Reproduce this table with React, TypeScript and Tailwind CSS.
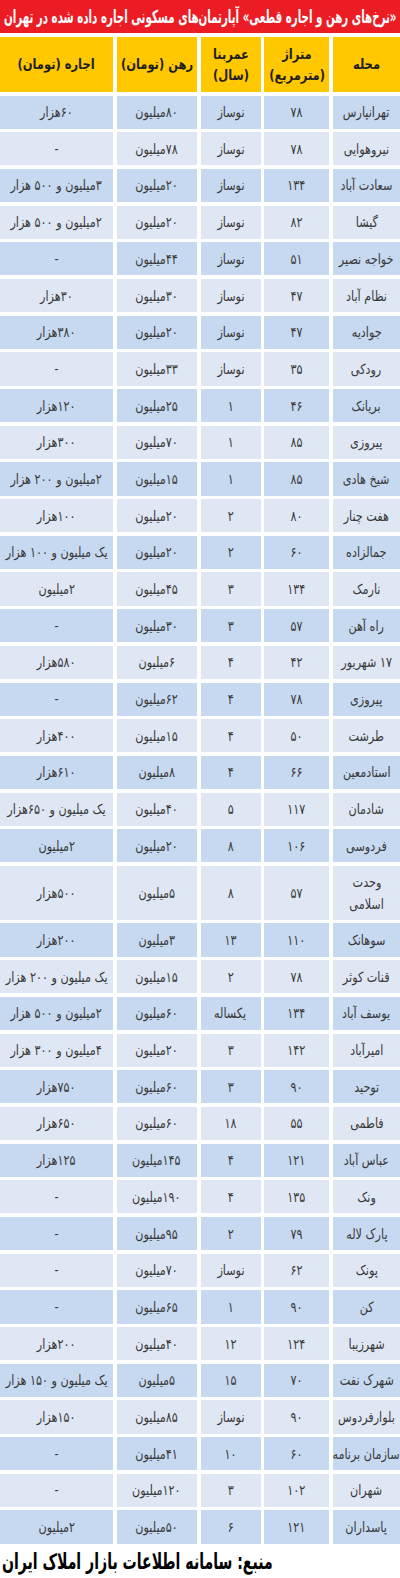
import React from "react"

const fa = (s: string) => s.replace(/[0-9]/g, (d) => "۰۱۲۳۴۵۶۷۸۹"[Number(d)])

// محله، متراژ، عمربنا، رهن، اجاره
const rows: string[][] = [
    ["تهرانپارس", "78", "نوساز", "80میلیون", "60هزار"],
    ["نیروهوایی", "78", "نوساز", "78میلیون", "-"],
    ["سعادت آباد", "134", "نوساز", "20میلیون", "3میلیون و 500 هزار"],
    ["گیشا", "82", "نوساز", "20میلیون", "2میلیون و 500 هزار"],
    ["خواجه نصیر", "51", "نوساز", "44میلیون", "-"],
    ["نظام آباد", "47", "نوساز", "30میلیون", "30هزار"],
    ["جوادیه", "47", "نوساز", "20میلیون", "380هزار"],
    ["رودکی", "35", "نوساز", "33میلیون", "-"],
    ["بریانک", "46", "1", "25میلیون", "120هزار"],
    ["پیروزی", "85", "1", "70میلیون", "300هزار"],
    ["شیخ هادی", "85", "1", "15میلیون", "2میلیون و 200 هزار"],
    ["هفت چنار", "80", "2", "20میلیون", "100هزار"],
    ["جمالزاده", "60", "2", "20میلیون", "یک میلیون و 100 هزار"],
    ["نارمک", "134", "3", "45میلیون", "2میلیون"],
    ["راه آهن", "57", "3", "30میلیون", "-"],
    ["17 شهریور", "42", "4", "6میلیون", "580هزار"],
    ["پیروزی", "78", "4", "62میلیون", "-"],
    ["طرشت", "50", "4", "15میلیون", "400هزار"],
    ["استادمعین", "66", "4", "8میلیون", "610هزار"],
    ["شادمان", "117", "5", "40میلیون", "یک میلیون و 650هزار"],
    ["فردوسی", "106", "8", "20میلیون", "2میلیون"],
    ["وحدت اسلامی", "57", "8", "5میلیون", "500هزار"],
    ["سوهانک", "110", "13", "3میلیون", "200هزار"],
    ["قنات کوثر", "78", "2", "15میلیون", "یک میلیون و 200 هزار"],
    ["یوسف آباد", "134", "یکساله", "60میلیون", "2میلیون و 500 هزار"],
    ["امیرآباد", "142", "3", "20میلیون", "4میلیون و 300 هزار"],
    ["توحید", "90", "3", "60میلیون", "750هزار"],
    ["فاطمی", "55", "18", "60میلیون", "650هزار"],
    ["عباس آباد", "121", "4", "145میلیون", "125هزار"],
    ["ونک", "135", "4", "190میلیون", "-"],
    ["پارک لاله", "79", "2", "95میلیون", "-"],
    ["پونک", "62", "نوساز", "70میلیون", "-"],
    ["کن", "90", "1", "65میلیون", "-"],
    ["شهرزیبا", "124", "12", "40میلیون", "200هزار"],
    ["شهرک نفت", "70", "15", "5میلیون", "یک میلیون و 150 هزار"],
    ["بلوارفردوس", "90", "نوساز", "85میلیون", "150هزار"],
    ["سازمان برنامه", "60", "10", "41میلیون", "-"],
    ["شهران", "102", "3", "120میلیون", "-"],
    ["پاسداران", "121", "6", "50میلیون", "2میلیون"],
]

const headers = [
    ["محله"],
    ["متراژ", "(مترمربع)"],
    ["عمربنا", "(سال)"],
    ["رهن (تومان)"],
    ["اجاره (تومان)"],
]

export default function App() {
    return (
        <div dir="rtl" className="w-[400px] h-[1578px] bg-white font-['DejaVu_Sans',sans-serif] overflow-hidden">
            {/* title bar */}
            <div className="h-[33px] bg-[#ec1c24] text-white font-bold text-[18px] flex items-center justify-center whitespace-nowrap overflow-hidden">
                <span className="inline-block scale-x-[0.57] tracking-[-0.4px]">
                    «نرخ‌های رهن و اجاره قطعی» آپارتمان‌های مسکونی اجاره داده شده در تهران
                </span>
            </div>

            <div className="mt-[4px] grid grid-cols-[67px_65px_60px_80px_113px] gap-x-[3.75px] gap-y-[3.5px]">
                {headers.map((h, i) => (
                    <div key={i} className="h-[55px] bg-[#ffc800] flex flex-col items-center justify-center text-[#1f1f1f] font-bold text-[14px] leading-[21px] whitespace-nowrap">
                        {h.map((line, j) => (
                            <span key={j} className="inline-block scale-x-[0.82]">{line}</span>
                        ))}
                    </div>
                ))}

                {rows.map((r, idx) => {
                    const tall = r[0] === "وحدت اسلامی"
                    const bg = idx % 2 === 0 ? "bg-[#c6d9f0]" : "bg-[#dfe7f4]"
                    return r.map((cell, c) => (
                        <div
                            key={idx + "-" + c}
                            className={
                                (tall ? "h-[54px] " : "h-[33.2px] ") +
                                bg +
                                " flex flex-col items-center justify-center text-center text-[#383838] text-[14px] leading-[22px] whitespace-nowrap"
                            }
                        >
                            {tall && c === 0 ? (
                                <>
                                    <span className="inline-block scale-x-[0.8]">وحدت</span>
                                    <span className="inline-block scale-x-[0.8]">اسلامی</span>
                                </>
                            ) : (
                                <span className="inline-block scale-x-[0.8]">{fa(cell)}</span>
                            )}
                        </div>
                    ))
                })}
            </div>

            {/* source */}
            <div className="pt-[3px] flex justify-end">
                <p className="text-black font-bold text-[22px] leading-[30px] whitespace-nowrap origin-left scale-x-[0.64] pl-[3px]">
                    منبع: سامانه اطلاعات بازار املاک ایران
                </p>
            </div>
        </div>
    )
}
